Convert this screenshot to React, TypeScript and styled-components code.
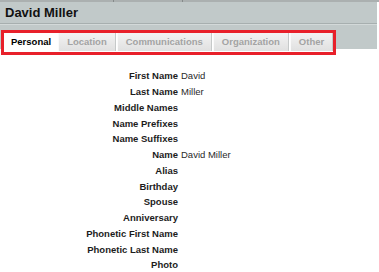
import { Fragment } from "react";
import styled, { createGlobalStyle } from "styled-components";

const GlobalStyle = createGlobalStyle`
  html, body {
    margin: 0;
    padding: 0;
    background: #ffffff;
  }
  body {
    font-family: "Liberation Sans", Arial, sans-serif;
    color: #1c1c1c;
  }
`;

const tabs = ["Personal", "Location", "Communications", "Organization", "Other"];

const fields: { label: string; value?: string }[] = [
  { label: "First Name", value: "David" },
  { label: "Last Name", value: "Miller" },
  { label: "Middle Names" },
  { label: "Name Prefixes" },
  { label: "Name Suffixes" },
  { label: "Name", value: "David Miller" },
  { label: "Alias" },
  { label: "Birthday" },
  { label: "Spouse" },
  { label: "Anniversary" },
  { label: "Phonetic First Name" },
  { label: "Phonetic Last Name" },
  { label: "Photo" },
];

const Page = styled.div`
  width: 379px;
  height: 272px;
  overflow: hidden;
`;

const TopStrip = styled.div`
  display: flex;
  height: 2px;
  background: #abb0b0;
`;

const StripSegment = styled.div<{ $width?: number }>`
  flex: ${({ $width }) => ($width ? `0 0 ${$width}px` : "1")};
  border-right: 1px solid #858a8a;

  &:last-child {
    border-right: none;
  }
`;

const Header = styled.div`
  background: #c1c9c9;
  margin-right: 2px;
`;

const TitleBar = styled.div`
  height: 21px;
  padding-left: 5px;
  display: flex;
  align-items: center;
  border-bottom: 1px solid #a7afaf;
  box-shadow: 0 1px 0 #d3d9d9;
`;

const Title = styled.h1`
  margin: 0;
  font-size: 13px;
  font-weight: bold;
  color: #111111;
`;

const TabBand = styled.div`
  padding: 7px 0 0 4px;
  height: 18px;
`;

const TabList = styled.div`
  display: inline-flex;
  gap: 1px;
  padding: 0 0 1px 1px;
  background: #ffffff;
  outline: 3px solid #e8202a;
`;

const Tab = styled.div<{ $active: boolean }>`
  height: 18px;
  padding: 0 ${({ $active }) => ($active ? 6 : 8)}px;
  display: flex;
  align-items: center;
  font-size: 9.5px;
  font-weight: bold;
  color: ${({ $active }) => ($active ? "#000000" : "#a3a3a3")};
  background: ${({ $active }) =>
    $active ? "#ffffff" : "linear-gradient(#f3f3f3, #e0e0e0)"};
  border-right: ${({ $active }) => ($active ? "none" : "1px solid #c6c9c9")};
  border-left: ${({ $active }) => ($active ? "none" : "1px solid #fafafa")};
`;

const Details = styled.div`
  display: grid;
  grid-template-columns: 178px 1fr;
  column-gap: 3px;
  grid-auto-rows: 15.75px;
  padding-top: 19px;
  font-size: 9.5px;
`;

const Label = styled.div`
  font-weight: bold;
  color: #1c1c1c;
  display: flex;
  align-items: center;
  justify-content: flex-end;
`;

const Value = styled.div`
  color: #2a2a2a;
  display: flex;
  align-items: center;
`;

const App = () => {
  return (
    <Page>
      <GlobalStyle />
      <TopStrip>
        <StripSegment $width={113} />
        <StripSegment $width={68} />
        <StripSegment />
      </TopStrip>
      <Header>
        <TitleBar>
          <Title>David Miller</Title>
        </TitleBar>
        <TabBand>
          <TabList>
            {tabs.map((tab, i) => (
              <Tab key={tab} $active={i === 0}>
                {tab}
              </Tab>
            ))}
          </TabList>
        </TabBand>
      </Header>
      <Details>
        {fields.map((field) => (
          <Fragment key={field.label}>
            <Label>{field.label}</Label>
            <Value>{field.value}</Value>
          </Fragment>
        ))}
      </Details>
    </Page>
  );
};

export default App;
